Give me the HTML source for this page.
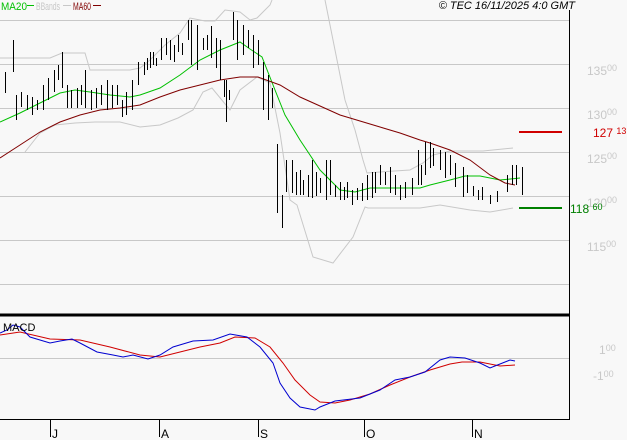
<!DOCTYPE html>
<html><head><meta charset="utf-8"><style>
html,body{margin:0;padding:0;background:#f8f8f8;}
svg{display:block;font-family:"Liberation Sans",sans-serif;}
</style></head><body>
<svg width="627" height="440" xmlns="http://www.w3.org/2000/svg">
<rect width="627" height="440" fill="#f8f8f8"/>
<g stroke="#c8c8c8" stroke-width="1">
<line x1="0" y1="20.5" x2="569" y2="20.5"/>
<line x1="0" y1="64.5" x2="569" y2="64.5"/>
<line x1="0" y1="108.5" x2="569" y2="108.5"/>
<line x1="0" y1="152.5" x2="569" y2="152.5"/>
<line x1="0" y1="196.5" x2="569" y2="196.5"/>
<line x1="0" y1="240.5" x2="569" y2="240.5"/>
<line x1="0" y1="284.5" x2="569" y2="284.5"/>
<line x1="0" y1="358.5" x2="569" y2="358.5"/>
</g>
<g fill="none" stroke="#c8c8c8" stroke-width="1">
<polyline points="0,58 50,58 62,53 85,53 90,70 130,70 140,68 150,60 165,45 180,33 190,18 205,21 215,21 225,10 240,12 250,20 257,18 270,5 272,0"/>
<polyline points="325,0 327,10 335,50 345,100 355,130 363,160 367,173 380,172 410,170 423,163 433,155 450,151 483,151 513,148"/>
<polyline points="25,152 40,133 55,125 75,123 95,122 120,122 140,127 160,125 178,118 193,110 203,92 212,88 230,110 240,90 257,77 270,83 280,133 290,200 297,205 313,257 333,263 353,237 365,207 368,208 420,208 440,205 470,210 490,212 513,208"/>
</g>
<polyline fill="none" stroke="#00c000" stroke-width="1" points="0,122 20,113 40,103 60,93 75,90 90,92 110,95 130,97 140,95 160,88 180,75 200,60 220,50 240,42 250,49 262,57 275,90 285,115 300,140 320,170 340,190 355,192 370,188 400,188 420,188 430,185 450,180 465,176 480,176 500,180 520,178"/>
<polyline fill="none" stroke="#800000" stroke-width="1" points="0,158 20,145 40,132 60,122 80,115 100,110 120,108 140,105 160,97 180,90 200,85 220,80 240,77 258,77 280,85 300,97 320,106 340,115 360,121 380,127 400,133 420,140 430,143 450,150 470,160 490,175 505,183 515,185"/>
<path transform="translate(0.5,0)" fill="none" stroke="#000" stroke-width="1" d="
M5,72V93M13,40V72M16,95V120M21,92V107M27,95V110M32,97V115M37,100V110M43,85V110M48,78V100M54,70V92M58,65V80M62,52V88M67,85V108M71,90V108M77,88V108M81,85V105M85,70V108M91,90V110M96,88V108M101,85V105M107,80V110M112,85V108M117,85V105M122,100V117M126,92V115M132,80V110M138,62V85M144,62V75M147,58V70M150,52V68M153,52V65M156,58V66M161,38V60M166,38V55M170,40V60M174,45V62M178,35V52M182,43V55M188,20V40M191,20V65M197,25V70M203,38V50M207,35V50M211,26V58M216,38V68M220,40V80M224,80V97M226,80V122M229,90V100
M233,12V40M237,20V60M243,25V55M248,30V48M253,35V68M258,40V65M263,62V110M268,75V120M272,88V108
M277,144V213M282,195V228M286,160V192M292,160V193M296,172V195M300,170V195M303,180V195M308,175V197M312,160V198M316,172V196M320,178V193M326,160V200M330,160V195M335,185V197M340,182V200M344,187V200M347,182V198M352,190V205M357,188V200M362,183V201M367,175V200M372,172V198M375,172V193M380,165V185M385,172V185M390,167V193M395,175V195M400,185V200M405,182V198M412,178V195M418,150V185M421,165V185M425,142V175M430,142V168M433,148V166M440,150V170M445,152V178M450,155V175M455,163V187M463,167V197M467,175V193M473,186V196M478,190V200M482,187V200M490,195V204M497,191V202M507,175V192M512,165V185M516,165V185M522,167V195"/>
<rect x="519" y="131" width="43" height="2" fill="#d00000"/>
<rect x="519" y="207" width="43" height="2" fill="#008000"/>
<line x1="569.5" y1="10" x2="569.5" y2="420" stroke="#000"/>
<line x1="0" y1="315" x2="570" y2="315" stroke="#000" stroke-width="3"/>
<line x1="0" y1="419.5" x2="570" y2="419.5" stroke="#000"/>
<g stroke="#000"><line x1="50.5" y1="419" x2="50.5" y2="437"/><line x1="159.5" y1="419" x2="159.5" y2="437"/><line x1="258.5" y1="419" x2="258.5" y2="437"/><line x1="364.5" y1="419" x2="364.5" y2="437"/><line x1="472.5" y1="419" x2="472.5" y2="437"/></g>
<g font-size="12" fill="#000"><text x="52" y="438">J</text><text x="161" y="438">A</text><text x="260" y="438">S</text><text x="366" y="438">O</text><text x="474" y="438">N</text></g>
<polyline fill="none" stroke="#d00000" stroke-width="1" points="0,335 20,332 50,339 80,340 110,347 140,355 160,357 180,352 200,347 220,343 235,337 255,338 270,347 283,363 295,380 310,395 320,402 335,403 350,400 370,394 390,385 410,377 430,370 450,364 462,362 480,362 500,366 515,365"/>
<polyline fill="none" stroke="#0000d0" stroke-width="1" points="0,333 7,330 13,325 20,327 30,337 50,343 60,341 72,339 80,343 97,352 113,355 123,357 133,355 148,359 160,355 173,347 193,341 213,340 230,334 247,337 260,347 273,363 280,383 290,398 300,407 315,410 320,407 335,401 360,398 380,390 395,380 410,377 425,372 440,360 450,357 465,358 480,363 490,368 500,364 510,360 515,361"/>
<text x="3" y="331" font-size="11" fill="#000">MACD</text>
<g font-size="11">
<text x="1" y="10" fill="#00c000" textLength="26" lengthAdjust="spacingAndGlyphs">MA20</text><rect x="27" y="5" width="7" height="1" fill="#00c000"/>
<text x="36" y="10" fill="#c8c8c8" textLength="24" lengthAdjust="spacingAndGlyphs">BBands</text><rect x="63" y="5" width="8" height="1" fill="#c8c8c8"/>
<text x="73" y="10" fill="#800000" textLength="18" lengthAdjust="spacingAndGlyphs">MA60</text><rect x="93" y="5" width="8" height="1" fill="#800000"/>
</g>
<text x="575" y="9" font-size="11" font-style="italic" fill="#000" text-anchor="end">© TEC 16/11/2025 4:0 GMT</text>
<g font-size="12" fill="#c8c8c8">
<text x="587" y="75">135<tspan font-size="9" dy="-4">00</tspan></text>
<text x="587" y="119">130<tspan font-size="9" dy="-4">00</tspan></text>
<text x="587" y="163">125<tspan font-size="9" dy="-4">00</tspan></text>
<text x="587" y="207">120<tspan font-size="9" dy="-4">00</tspan></text>
<text x="587" y="251">115<tspan font-size="9" dy="-4">00</tspan></text>
<text x="599" y="354">1<tspan font-size="9" dy="-3">00</tspan></text>
<text x="593" y="380">-1<tspan font-size="9" dy="-3">00</tspan></text>
</g>
<text x="593" y="137" font-size="12" fill="#d00000">127 <tspan font-size="9" dy="-3">13</tspan></text>
<text x="570" y="213" font-size="12" fill="#008000">118 <tspan font-size="9" dy="-3">60</tspan></text>
</svg>
</body></html>
